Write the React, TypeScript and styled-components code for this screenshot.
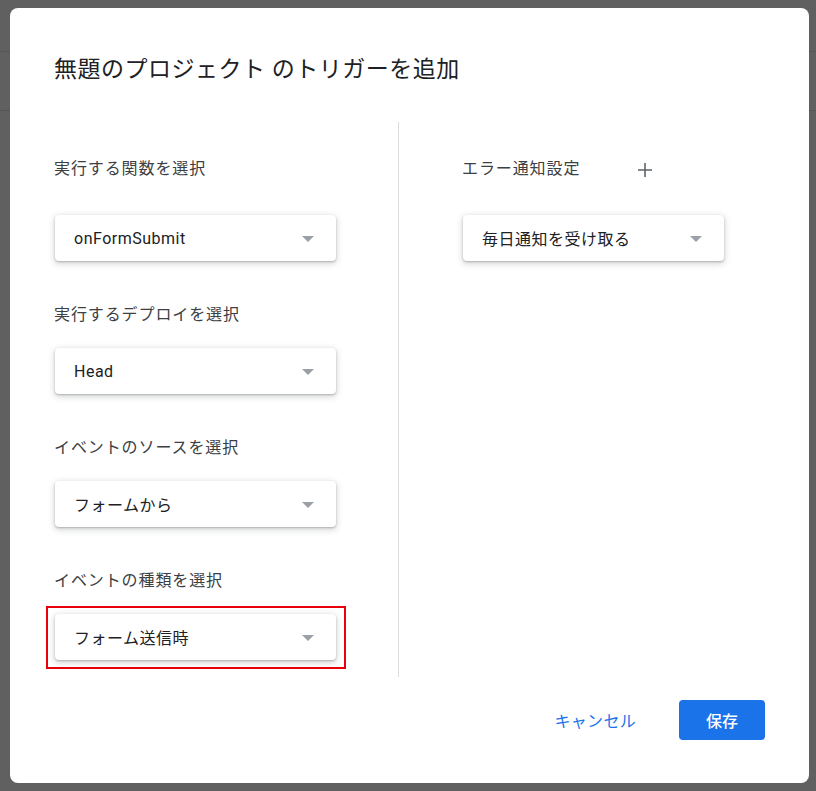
import React from "react";
import styled, { createGlobalStyle } from "styled-components";

const Global = createGlobalStyle`
  html, body { margin: 0; padding: 0; }
  body {
    width: 816px;
    height: 791px;
    overflow: hidden;
    background: #606060;
    font-family: Roboto, "Noto Sans CJK JP", "Noto Sans", sans-serif;
  }
`;

const Page = styled.div`
  position: relative;
  width: 816px;
  height: 791px;
  background: #606060;
`;

const PageHeader = styled.div`
  height: 51px;
  border-bottom: 1px solid #555555;
`;

const PageToolbar = styled.div`
  height: 58px;
  border-bottom: 1px solid #555555;
`;

const Dialog = styled.div`
  position: absolute;
  left: 10px;
  top: 8px;
  width: 799px;
  height: 775px;
  box-sizing: border-box;
  background: #ffffff;
  border-radius: 8px;
  padding: 47px 44px 0 44px;
  display: flex;
  flex-direction: column;
`;

const Title = styled.h2`
  margin: 0;
  font-weight: 400;
  font-size: 23px;
  line-height: 30px;
  color: #202124;
  letter-spacing: 0.5px;
`;

const Body = styled.div`
  margin-top: 37px;
  display: grid;
  grid-template-columns: 344px 1px 1fr;
  grid-template-rows: 555px;
  height: 555px;
`;

const Column = styled.div<{ $pad?: number }>`
  display: flex;
  flex-direction: column;
  padding-left: ${(p) => p.$pad ?? 0}px;
  padding-top: 37px;
  min-height: 0;
`;

const Divider = styled.div`
  background: #dadce0;
  width: 1px;
  height: 100%;
`;

const Field = styled.div<{ $first?: boolean }>`
  display: flex;
  flex-direction: column;
  gap: ${(p) => (p.$first ? 36 : 23)}px;
  margin-bottom: 44px;
  &:last-child {
    margin-bottom: 0;
  }
`;

const LabelRow = styled.div`
  display: flex;
  align-items: center;
  height: 20px;
`;

const Label = styled.div`
  font-size: 16px;
  line-height: 20px;
  color: #3c4043;
  letter-spacing: 0.9px;
`;

const PlusButton = styled.div`
  margin-left: 56px;
  width: 18px;
  height: 18px;
  display: flex;
  align-items: center;
  justify-content: center;
  margin-top: 2px;
`;

const SelectWrap = styled.div<{ $highlight?: boolean }>`
  position: relative;
  margin-left: 1px;
  ${(p) =>
    p.$highlight &&
    `
    &::after {
      content: "";
      position: absolute;
      left: -9px;
      top: -8px;
      width: 300px;
      height: 63px;
      box-sizing: border-box;
      border: 2px solid #e8000b;
      pointer-events: none;
    }
  `}
`;

const Select = styled.div<{ $w?: number }>`
  width: ${(p) => p.$w ?? 281}px;
  height: 46px;
  box-sizing: border-box;
  border-radius: 4px;
  background: #fff;
  box-shadow: 0 1px 2px rgba(60, 64, 67, 0.3), 0 2px 6px 1px rgba(60, 64, 67, 0.2);
  display: flex;
  align-items: center;
  justify-content: space-between;
  padding: 0 22px 0 19px;
`;

const SelectText = styled.span`
  font-size: 16px;
  color: #202124;
  letter-spacing: 0.5px;
`;

const Arrow = styled.span`
  width: 0;
  height: 0;
  border-left: 6px solid transparent;
  border-right: 6px solid transparent;
  border-top: 6px solid #9aa0a6;
  margin-top: 2px;
`;

const Footer = styled.div`
  display: flex;
  justify-content: flex-end;
  align-items: center;
  gap: 43px;
  margin-top: 23px;
`;

const TextButton = styled.button`
  border: none;
  background: transparent;
  color: #1a73e8;
  font-family: inherit;
  font-size: 16px;
  padding: 0;
  letter-spacing: 0.3px;
`;

const PrimaryButton = styled.button`
  border: none;
  background: #1a73e8;
  color: #fff;
  font-family: inherit;
  font-size: 16px;
  font-weight: 500;
  width: 86px;
  height: 40px;
  border-radius: 4px;
`;

const DropSelect = ({ text, w }: { text: string; w?: number }) => (
  <Select $w={w}>
    <SelectText>{text}</SelectText>
    <Arrow />
  </Select>
);

export default function App() {
  return (
    <>
      <Global />
      <Page>
        <PageHeader />
        <PageToolbar />
        <Dialog>
          <Title>無題のプロジェクト のトリガーを追加</Title>
          <Body>
            <Column>
              <Field $first>
                <LabelRow>
                  <Label>実行する関数を選択</Label>
                </LabelRow>
                <SelectWrap>
                  <DropSelect text="onFormSubmit" />
                </SelectWrap>
              </Field>
              <Field>
                <LabelRow>
                  <Label>実行するデプロイを選択</Label>
                </LabelRow>
                <SelectWrap>
                  <DropSelect text="Head" />
                </SelectWrap>
              </Field>
              <Field>
                <LabelRow>
                  <Label>イベントのソースを選択</Label>
                </LabelRow>
                <SelectWrap>
                  <DropSelect text="フォームから" />
                </SelectWrap>
              </Field>
              <Field>
                <LabelRow>
                  <Label>イベントの種類を選択</Label>
                </LabelRow>
                <SelectWrap $highlight>
                  <DropSelect text="フォーム送信時" />
                </SelectWrap>
              </Field>
            </Column>
            <Divider />
            <Column $pad={63}>
              <Field $first>
                <LabelRow>
                  <Label>エラー通知設定</Label>
                  <PlusButton>
                    <svg width="16" height="16" viewBox="0 0 16 16">
                      <path d="M8 1v14M1 8h14" stroke="#5f6368" strokeWidth="1.6" fill="none" />
                    </svg>
                  </PlusButton>
                </LabelRow>
                <SelectWrap>
                  <DropSelect text="毎日通知を受け取る" w={261} />
                </SelectWrap>
              </Field>
            </Column>
          </Body>
          <Footer>
            <TextButton>キャンセル</TextButton>
            <PrimaryButton>保存</PrimaryButton>
          </Footer>
        </Dialog>
      </Page>
    </>
  );
}
